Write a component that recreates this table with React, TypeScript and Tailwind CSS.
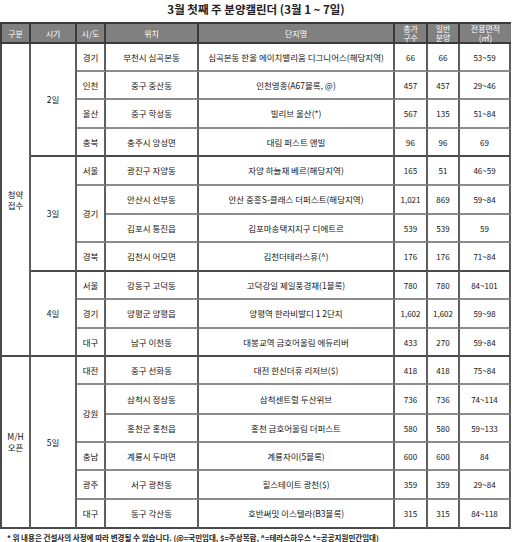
import React from 'react';

type Span = [string, number];

interface CalRow {
  gubun?: Span;
  date?: Span;
  region?: Span;
  loc: string;
  name: string;
  total: string;
  general: string;
  area: string;
  groupEnd?: boolean;
}

const ROWS: CalRow[] = [
  { gubun: ['청약\n접수', 11], date: ['2일', 4], region: ['경기', 1], loc: '부천시 심곡본동', name: '심곡본동 한울 에이치밸리움 디그니어스(해당지역)', total: '66', general: '66', area: '53~59' },
  { region: ['인천', 1], loc: '중구 중산동', name: '인천영종(A67블록, @)', total: '457', general: '457', area: '29~46' },
  { region: ['울산', 1], loc: '중구 학성동', name: '빌리브 울산(*)', total: '567', general: '135', area: '51~84' },
  { region: ['충북', 1], loc: '충주시 앙성면', name: '대림 퍼스트 앤빌', total: '96', general: '96', area: '69', groupEnd: true },
  { date: ['3일', 4], region: ['서울', 1], loc: '광진구 자양동', name: '자양 하늘채 베르(해당지역)', total: '165', general: '51', area: '46~59' },
  { region: ['경기', 2], loc: '안산시 선부동', name: '안산 중흥S-클래스 더퍼스트(해당지역)', total: '1,021', general: '869', area: '59~84' },
  { loc: '김포시 통진읍', name: '김포마송택지지구 디에트르', total: '539', general: '539', area: '59' },
  { region: ['경북', 1], loc: '김천시 어모면', name: '김천더테라스휴(^)', total: '176', general: '176', area: '71~84', groupEnd: true },
  { date: ['4일', 3], region: ['서울', 1], loc: '강동구 고덕동', name: '고덕강일 제일풍경채(1블록)', total: '780', general: '780', area: '84~101' },
  { region: ['경기', 1], loc: '양평군 양평읍', name: '양평역 한라비발디 1 2단지', total: '1,602', general: '1,602', area: '59~98' },
  { region: ['대구', 1], loc: '남구 이천동', name: '대봉교역 금호어울림 에듀리버', total: '433', general: '270', area: '59~84', groupEnd: true },
  { gubun: ['M/H\n오픈', 6], date: ['5일', 6], region: ['대전', 1], loc: '중구 선화동', name: '대전 한신더휴 리저브($)', total: '418', general: '418', area: '75~84' },
  { region: ['강원', 2], loc: '삼척시 정상동', name: '삼척센트럴 두산위브', total: '736', general: '736', area: '74~114' },
  { loc: '홍천군 홍천읍', name: '홍천 금호어울림 더퍼스트', total: '580', general: '580', area: '59~133' },
  { region: ['충남', 1], loc: '계룡시 두마면', name: '계룡자이(5블록)', total: '600', general: '600', area: '84' },
  { region: ['광주', 1], loc: '서구 광천동', name: '힐스테이트 광천($)', total: '359', general: '359', area: '29~84' },
  { region: ['대구', 1], loc: '동구 각산동', name: '호반써밋 이스텔라(B3블록)', total: '315', general: '315', area: '84~118', groupEnd: true },
];

const HEIGHTS = [28, 28, 29, 28, 29, 29, 28, 29, 28, 29, 28, 28, 30, 28, 28, 29, 29];

const HEAD = ['구분', '시기', '시/도', '위치', '단지명', '총가\n구수', '일반\n분양', '전용면적\n(㎡)'];
const WIDTHS = ['w-[31px]', 'w-[46px]', 'w-[29px]', 'w-[93px]', 'w-[196px]', 'w-[33px]', 'w-[32px]', 'w-[51px]'];

const cell = 'border-r-2 border-r-[#5e5e5e] border-b-2 text-center align-middle p-0 whitespace-pre-line';
const dark = 'border-b-[#4a4a4a]';
const light = 'border-b-[#8c8c8c]';

export default function App() {
  return (
    <div
      className="w-[512px] h-[542px] bg-white text-[#141414] overflow-hidden"
      style={{ fontFamily: '"Noto Sans CJK KR", "Noto Sans", sans-serif' }}
    >
      <div className="h-[22px] flex items-center justify-center text-[11.5px] font-bold text-[#222] pb-[2px]">
        3월 첫째 주 분양캘린더 (3월 1 ~ 7일)
      </div>
      <table className="table-fixed border-separate border-spacing-0 w-[511px] text-[8.5px] leading-[11px]">
        <colgroup>
          {WIDTHS.map((w, i) => (
            <col key={i} className={w} />
          ))}
        </colgroup>
        <thead>
          <tr className="h-[21px]">
            {HEAD.map((h, i) => (
              <th
                key={h}
                className={`bg-[#808080] text-white font-normal text-[8px] leading-[9px] border-t-2 border-t-[#3a3a3a] border-b-2 border-b-[#3a3a3a] p-0 text-center align-middle whitespace-pre-line ${
                  i === 0 ? 'border-l-2 border-l-[#3a3a3a]' : ''
                } ${i < 7 ? 'border-r-2 border-r-[#3a3a3a]' : ''}`}
              >
                {h}
              </th>
            ))}
          </tr>
        </thead>
        <tbody>
          {ROWS.map((r, i) => {
            const b = r.groupEnd ? dark : light;
            return (
              <tr key={i} style={{ height: HEIGHTS[i] }}>
                {r.gubun && (
                  <td rowSpan={r.gubun[1]} className={`${cell} ${dark} border-l-2 border-l-[#4a4a4a]`}>
                    {r.gubun[0]}
                  </td>
                )}
                {r.date && (
                  <td rowSpan={r.date[1]} className={`${cell} ${dark}`}>
                    {r.date[0]}
                  </td>
                )}
                {r.region && (
                  <td
                    rowSpan={r.region[1]}
                    className={`${cell} ${ROWS[i + r.region[1] - 1].groupEnd ? dark : light}`}
                  >
                    {r.region[0]}
                  </td>
                )}
                <td className={`${cell} ${b}`}>{r.loc}</td>
                <td className={`${cell} ${b} whitespace-nowrap`}>{r.name}</td>
                <td className={`${cell} ${b} text-[8px]`}>{r.total}</td>
                <td className={`${cell} ${b} text-[8px]`}>{r.general}</td>
                <td className={`${cell} ${b} border-r-0 text-[8px]`}>{r.area}</td>
              </tr>
            );
          })}
        </tbody>
      </table>
      <p className="mt-[3px] pl-[7px] text-[7.5px] font-bold text-[#222] whitespace-nowrap">
        * 위 내용은 건설사의 사정에 따라 변경될 수 있습니다. (@=국민임대, $=주상복합, ^=테라스하우스 *=공공지원민간임대)
      </p>
    </div>
  );
}
